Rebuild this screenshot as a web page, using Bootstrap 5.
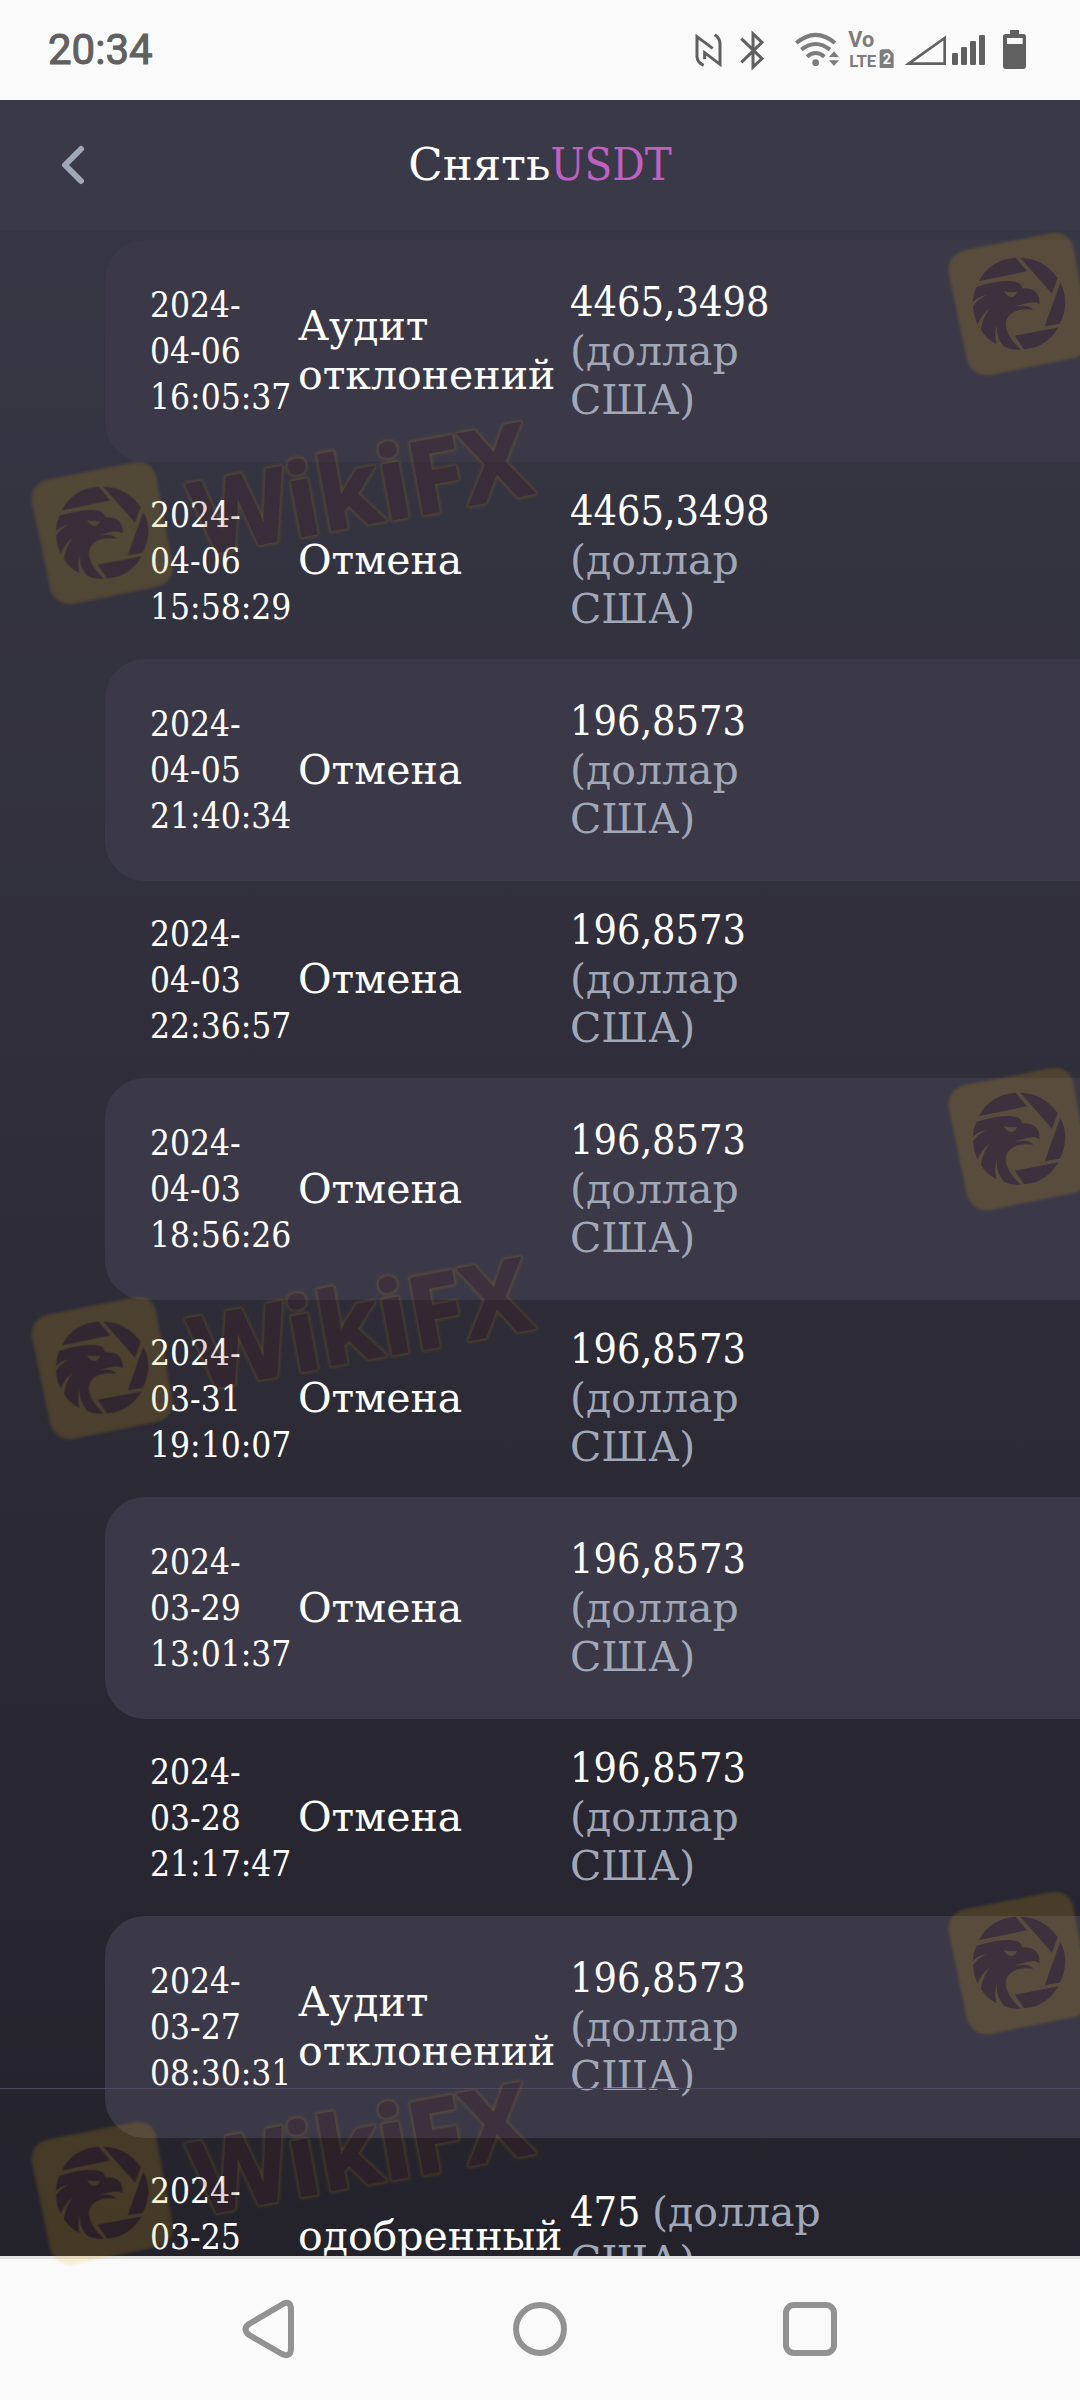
<!DOCTYPE html>
<html lang="ru">
<head>
<meta charset="utf-8">
<meta name="viewport" content="width=device-width, initial-scale=1">
<title>Снять USDT</title>
<link href="https://cdn.jsdelivr.net/npm/bootstrap@5.3.0/dist/css/bootstrap.min.css" rel="stylesheet">
<style>
  body { font-family: "DejaVu Serif Condensed", "DejaVu Serif", serif; background: #fafafa; color: #fff; }
  svg { display: block; }
  .status-bar { height: 100px; padding: 0 48px; background: #fafafa; color: #606060; font-family: Roboto, sans-serif; }
  .clock { font-size: 42px; line-height: 48px; font-weight: 400; -webkit-text-stroke: 1px #606060; }
  .app { background: linear-gradient(#383745, #24232c); }
  .app-header { height: 130px; background: #3a3947; }
  .back-btn { padding: 12px 20px; margin-left: 40px; border: 0; background: none; }
  .app-title { font-size: 45px; line-height: 56px; font-weight: 400; }
  .coin { color: #c061c2; }
  .wide-face, .col-wide { font-family: "DejaVu Serif", serif; }
  .records { padding: 10px 0 0 105px; }
  .records-table { width: 100%; table-layout: fixed; border-collapse: separate; border-spacing: 0; }
  .records-table td { height: 197px; padding: 0; vertical-align: middle; font-size: 41px; line-height: 49px; }
  .records-table tr:nth-child(odd) td { background: #3b3947; height: 222px; }
  .records-table tr td:first-child { padding-left: 45px; font-size: 35px; line-height: 46px; white-space: nowrap; }
  .records-table tr:nth-child(odd) td:first-child { border-radius: 40px 0 0 40px; }
  .records-table tr td:last-child { padding-right: 230px; }
  .col-date { width: 193px; }
  .col-state { width: 272px; }
  .unit { color: #a0a8b8; font-family: "DejaVu Serif", serif; }
  .divider { left: 0; right: 0; bottom: 167px; height: 1px; background: #4c4961; }
  .nav-keys { height: 144px; padding-bottom: 2px; background: #fafafa; border-top: 3px solid #e3e3e3; }
  .nav-keys button { border: 0; background: none; }
  .stamp { left: 25px; width: 530px; height: 220px; }
  .stamp-mark { left: 942px; width: 160px; height: 155px; }
  .stamps { inset: 0; pointer-events: none; }
  .at-a { top: 400px; } .at-b { top: 1235px; } .at-c { top: 2060px; }
  .mark-a { top: 226px; } .mark-b { top: 1061px; } .mark-c { top: 1885px; }
</style>
</head>
<body>
<div class="d-flex flex-column vh-100 position-relative overflow-hidden">

  <div class="status-bar d-flex align-items-center justify-content-between flex-shrink-0">
    <span class="clock">20:34</span>
    <svg width="352" height="80" viewBox="0 0 1056 240" fill="#606060" role="img" aria-label="NFC, Bluetooth, Wi-Fi, VoLTE, сеть, батарея">
      <g fill="none" stroke="#606060" stroke-width="9">
        <path d="M71 166Q52 158 51 140V80L98 115"/>
        <path d="M104 74Q120 84 120 101V163L74 128V148"/>
        <path d="M184 86L246 146L219 171V71L246 97L184 157"/>
      </g>
      <g fill="none" stroke="#7c7c7c" stroke-width="12">
        <path d="M349 99Q407 50 465 99"/><path d="M364 119Q407 85 450 119"/><path d="M381 140Q407 118 433 140"/>
      </g>
      <circle cx="407" cy="158" r="10" fill="#7c7c7c"/>
      <path d="M462 124L477 141H447ZM462 168L447 151H477Z" fill="#7c7c7c"/>
      <g fill="#7c7c7c" font-family="Roboto, sans-serif" font-weight="700">
        <text x="505" y="112" font-size="65">Vo</text>
        <text x="508" y="170" font-size="50">LTE</text>
      </g>
      <path d="M599 127Q599 118 608 118H628L641 131V174H599Z" fill="#7c7c7c"/>
      <text x="608" y="163" font-size="44" font-weight="700" font-family="Roboto, sans-serif" fill="#fafafa">2</text>
      <path d="M686 161L794 84V161Z" fill="none" stroke="#606060" stroke-width="8"/>
      <rect x="816" y="129" width="18" height="36" rx="4"/><rect x="843" y="111" width="18" height="54" rx="4"/>
      <rect x="870" y="93" width="18" height="72" rx="4"/><rect x="897" y="75" width="18" height="90" rx="4"/>
      <path d="M990 60H1017V72H1030Q1038 72 1038 80V169Q1038 177 1030 177H977Q969 177 969 169V80Q969 72 977 72H990Z"/>
      <rect x="981" y="84" width="47" height="18" fill="#fafafa"/>
    </svg>
  </div>

  <div class="app d-flex flex-column flex-grow-1 overflow-hidden position-relative">
    <header class="app-header d-flex align-items-center flex-shrink-0">
      <div class="col-3">
        <button type="button" class="back-btn" aria-label="Назад">
          <svg width="26" height="40" viewBox="0 0 26 40" fill="none" stroke="#a0a8b8" stroke-width="6" stroke-linecap="round" stroke-linejoin="round"><path d="M21 4L5 20L21 36"/></svg>
        </button>
      </div>
      <h1 class="app-title col-6 text-center m-0"><span class="wide-face">Снять</span><span class="coin">USDT</span></h1>
    </header>

    <main class="records">
      <table class="records-table">
        <colgroup><col class="col-date"><col class="col-state"><col></colgroup>
        <tbody>
          <tr><td>2024-<br>04-06<br>16:05:37</td><td class="col-wide">Аудит отклонений</td><td>4465,3498 <span class="unit">(доллар США)</span></td></tr>
          <tr><td>2024-<br>04-06<br>15:58:29</td><td class="col-wide">Отмена</td><td>4465,3498 <span class="unit">(доллар США)</span></td></tr>
          <tr><td>2024-<br>04-05<br>21:40:34</td><td class="col-wide">Отмена</td><td>196,8573 <span class="unit">(доллар США)</span></td></tr>
          <tr><td>2024-<br>04-03<br>22:36:57</td><td class="col-wide">Отмена</td><td>196,8573 <span class="unit">(доллар США)</span></td></tr>
          <tr><td>2024-<br>04-03<br>18:56:26</td><td class="col-wide">Отмена</td><td>196,8573 <span class="unit">(доллар США)</span></td></tr>
          <tr><td>2024-<br>03-31<br>19:10:07</td><td class="col-wide">Отмена</td><td>196,8573 <span class="unit">(доллар США)</span></td></tr>
          <tr><td>2024-<br>03-29<br>13:01:37</td><td class="col-wide">Отмена</td><td>196,8573 <span class="unit">(доллар США)</span></td></tr>
          <tr><td>2024-<br>03-28<br>21:17:47</td><td class="col-wide">Отмена</td><td>196,8573 <span class="unit">(доллар США)</span></td></tr>
          <tr><td>2024-<br>03-27<br>08:30:31</td><td class="col-wide">Аудит отклонений</td><td>196,8573 <span class="unit">(доллар США)</span></td></tr>
          <tr><td>2024-<br>03-25<br>&nbsp;</td><td class="col-wide">одобренный</td><td>475 <span class="unit">(доллар США)</span></td></tr>
        </tbody>
      </table>
    </main>
    <div class="divider position-absolute"></div>
  </div>

  <nav class="nav-keys d-flex align-items-center justify-content-center flex-shrink-0">
    <button type="button" class="w-25 d-flex justify-content-center" aria-label="Назад">
      <svg width="60" height="60" viewBox="0 0 60 60" fill="none" stroke="#929292" stroke-width="6" stroke-linejoin="round"><path d="M43 5Q51 1 51 11V49Q51 59 42 55L9 36Q2 30 9 25Z"/></svg>
    </button>
    <button type="button" class="w-25 d-flex justify-content-center" aria-label="Домой">
      <svg width="60" height="60" viewBox="0 0 60 60" fill="none" stroke="#929292" stroke-width="6"><circle cx="30" cy="30" r="24"/></svg>
    </button>
    <button type="button" class="w-25 d-flex justify-content-center" aria-label="Недавние">
      <svg width="60" height="60" viewBox="0 0 60 60" fill="none" stroke="#929292" stroke-width="6"><rect x="6" y="6" width="48" height="48" rx="8"/></svg>
    </button>
  </nav>

  <div class="stamps position-absolute overflow-hidden" aria-hidden="true">
    <svg width="0" height="0" class="position-absolute">
      <defs>
        <filter id="soft" x="-10%" y="-10%" width="120%" height="120%"><feGaussianBlur stdDeviation="5"/></filter>
        <g id="eagle">
          <path filter="url(#soft)" fill="#dea711" d="M68 73L325 22Q378 14 393 62L443 330Q446 380 400 395L145 447Q95 452 76 405L20 140Q16 88 68 73Z"/>
          <g fill="#50121b">
            <path d="M110 166Q145 100 221 95L255 136Z"/>
            <path d="M235 95Q305 97 347 156L330 203Z"/>
            <path d="M355 170Q386 230 353 293L308 301Z"/>
            <path d="M350 304Q312 366 246 370L218 329Z"/>
            <path d="M104 182Q165 163 205 165Q238 166 241 187Q285 184 292 220L293 234Q280 226 258 231Q234 236 219 241Q262 234 274 251Q225 245 203 267Q186 284 194 311Q202 338 236 371Q210 374 186 362Q162 335 164 298Q156 320 163 354Q133 340 117 312Q120 280 143 247Q118 267 107 296Q94 268 93 241Q107 220 133 208Q108 211 93 228Q94 200 104 182Z"/>
          </g>
          <path fill="#dea711" d="M186 195Q206 201 225 197Q221 213 207 213Q193 211 186 195Z"/>
        </g>
        <g id="wordmark" font-family="Open Sans, sans-serif" font-weight="700" font-size="300">
          <g transform="translate(523 302) rotate(-10.5)">
            <text fill="none" stroke="#dea711" stroke-width="16" stroke-linejoin="round" filter="url(#soft)">WikiFX</text>
            <text fill="#50121b" stroke="#50121b" stroke-width="6" stroke-linejoin="round">WikiFX</text>
          </g>
        </g>
      </defs>
    </svg>
    <svg class="stamp at-a position-absolute" viewBox="0 -165 1590 660"><g opacity=".18"><use href="#eagle"/><use href="#wordmark"/></g></svg>
    <svg class="stamp at-b position-absolute" viewBox="0 -165 1590 660"><g opacity=".18"><use href="#eagle"/><use href="#wordmark"/></g></svg>
    <svg class="stamp at-c position-absolute" viewBox="0 -165 1590 660"><g opacity=".18"><use href="#eagle"/><use href="#wordmark"/></g></svg>
    <svg class="stamp-mark mark-a position-absolute" viewBox="0 0 480 465"><use href="#eagle" opacity=".18"/></svg>
    <svg class="stamp-mark mark-b position-absolute" viewBox="0 0 480 465"><use href="#eagle" opacity=".18"/></svg>
    <svg class="stamp-mark mark-c position-absolute" viewBox="0 0 480 465"><use href="#eagle" opacity=".18"/></svg>
  </div>
</div>
<script src="https://cdn.jsdelivr.net/npm/bootstrap@5.3.0/dist/js/bootstrap.bundle.min.js"></script>
</body>
</html>
